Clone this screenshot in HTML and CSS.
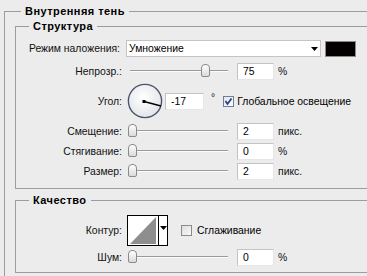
FILE: index.html
```html
<!DOCTYPE html>
<html>
<head>
<meta charset="utf-8">
<link rel="stylesheet" href="styles.css">
</head>
<body>
<div class="group outer">
  <div class="title">Внутренняя тень</div>

  <div class="group inner structure">
    <div class="title">Структура</div>

    <div class="row row-select">
      <span class="label label-select">Режим наложения:</span>
      <div class="select">
        <span>Умножение</span>
        <svg class="arrow" width="7" height="4" viewBox="0 0 7 4"><polygon points="0,0 7,0 3.5,4" fill="#000"/></svg>
      </div>
      <div class="swatch"></div>
    </div>

    <div class="row row-first">
      <span class="label">Непрозр.:</span>
      <div class="slider"><div class="track"></div><div class="thumb" style="left:74px"></div></div>
      <div class="input">75</div><span class="unit">%</span>
    </div>

    <div class="row row-angle">
      <span class="label">Угол:</span>
      <svg class="dial" width="36" height="36" viewBox="0 0 36 36">
        <defs>
          <radialGradient id="dg" cx="45%" cy="40%" r="60%">
            <stop offset="0" stop-color="#ffffff"/>
            <stop offset="1" stop-color="#e2e5ea"/>
          </radialGradient>
        </defs>
        <circle cx="18" cy="18" r="16.6" fill="url(#dg)" stroke="#4b566b" stroke-width="1.4"/>
        <line x1="17" y1="18.5" x2="34" y2="23" stroke="#000" stroke-width="1.3"/>
        <rect x="15.5" y="17" width="3" height="3" fill="#000"/>
      </svg>
      <div class="input input-angle">-17</div>
      <span class="deg">°</span>
      <svg class="check check-angle" width="11" height="11" viewBox="0 0 11 11">
        <defs>
          <linearGradient id="cg" x1="0" y1="0" x2="1" y2="1">
            <stop offset="0" stop-color="#dfe3ea"/>
            <stop offset="1" stop-color="#ffffff"/>
          </linearGradient>
        </defs>
        <rect x="0.5" y="0.5" width="10" height="10" fill="url(#cg)" stroke="#6f7d95"/>
        <polyline points="2.5,5 4.5,8 8.5,2.5" fill="none" stroke="#2b3f8f" stroke-width="1.8"/>
      </svg>
      <span class="check-label">Глобальное освещение</span>
    </div>

    <div class="row row-after">
      <span class="label">Смещение:</span>
      <div class="slider"><div class="track"></div><div class="thumb" style="left:1px"></div></div>
      <div class="input">2</div><span class="unit">пикс.</span>
    </div>

    <div class="row">
      <span class="label">Стягивание:</span>
      <div class="slider"><div class="track"></div><div class="thumb" style="left:1px"></div></div>
      <div class="input">0</div><span class="unit">%</span>
    </div>

    <div class="row">
      <span class="label">Размер:</span>
      <div class="slider"><div class="track"></div><div class="thumb" style="left:1px"></div></div>
      <div class="input">2</div><span class="unit">пикс.</span>
    </div>
  </div>

  <div class="group inner quality">
    <div class="title">Качество</div>

    <div class="row row-contour">
      <span class="label">Контур:</span>
      <div class="contour">
        <svg class="preview" width="30" height="29" viewBox="0 0 30 29">
          <polygon points="2,28 28,1 28,28" fill="#8e8e8e"/>
        </svg>
        <svg class="carrow" width="7" height="4" viewBox="0 0 7 4"><polygon points="0,0 7,0 3.5,4" fill="#000"/></svg>
      </div>
      <svg class="check check-smooth" width="11" height="11" viewBox="0 0 11 11">
        <defs>
          <linearGradient id="cg2" x1="0" y1="0" x2="1" y2="1">
            <stop offset="0" stop-color="#dcdcdc"/>
            <stop offset="1" stop-color="#fafafa"/>
          </linearGradient>
        </defs>
        <rect x="0.5" y="0.5" width="10" height="10" fill="url(#cg2)" stroke="#8a8a8a"/>
      </svg>
      <span class="check-label">Сглаживание</span>
    </div>

    <div class="row row-noise">
      <span class="label">Шум:</span>
      <div class="slider"><div class="track"></div><div class="thumb" style="left:1px"></div></div>
      <div class="input">0</div><span class="unit">%</span>
    </div>
  </div>
</div>
</body>
</html>
```

FILE: styles.css
```css
html, body {
  margin: 0;
  padding: 0;
}
body {
  width: 367px;
  height: 276px;
  overflow: hidden;
  background: #ececec;
  font-family: "Liberation Sans", Arial, sans-serif;
  font-size: 10.4px;
  color: #111;
}

.group {
  border: 1px solid #9c9c9c;
  border-right: none;
}
.outer {
  margin: 11px 0 0 4px;
  width: 362px;
  height: 264px;
  border-bottom: none;
}
.title {
  width: max-content;
  height: 13px;
  line-height: 13px;
  margin: -7px 0 0 16px;
  padding: 0 4px;
  background: #ececec;
  font-size: 11px;
  font-weight: bold;
  letter-spacing: 0.45px;
  color: #000;
}
.inner {
  margin-left: 10px;
  width: 352px;
}
.inner > .title {
  margin-left: 13px;
}
.structure {
  margin-top: 8px;
  padding-bottom: 7px;
}
.quality {
  margin-top: 11px;
  padding-bottom: 5px;
}

.row {
  display: flex;
  align-items: center;
  height: 20px;
}
.label {
  flex: none;
  width: 106px;
  margin-right: 5px;
  text-align: right;
}
.row-select {
  margin-top: 7px;
  height: 17px;
}
.label-select {
  width: 104px;
  margin-right: 6px;
}
.row-first {
  margin-top: 4px;
}
.row-angle {
  margin-top: 2px;
  height: 36px;
}
.row-after {
  margin-top: 2px;
}
.row-contour {
  margin-top: 8px;
  height: 31px;
}
.row-noise {
  margin-top: 1px;
}

.select {
  flex: none;
  box-sizing: border-box;
  width: 195px;
  height: 17px;
  border: 1px solid #c4c4c4;
  background: #fff;
  display: flex;
  align-items: center;
  padding-left: 2px;
  color: #000;
}
.select .arrow {
  margin-left: auto;
  margin-right: 2px;
}
.swatch {
  flex: none;
  box-sizing: border-box;
  width: 31px;
  height: 16px;
  margin-left: 4px;
  background: #050000;
  border: 1px solid #8a8a8a;
}

.slider {
  flex: none;
  position: relative;
  width: 102px;
  height: 20px;
  margin-right: 8px;
}
.track {
  margin: 9px 0 0 3px;
  width: 98px;
  height: 1px;
  background: #9a9a9a;
  border-bottom: 1px solid #fdfdfd;
}
.thumb {
  position: absolute;
  top: 3px;
  box-sizing: border-box;
  width: 9px;
  height: 13px;
  border: 1px solid #8a8a8a;
  border-radius: 4px 4px 2px 2px;
  background: linear-gradient(#ffffff, #dadada);
}

.input {
  flex: none;
  box-sizing: border-box;
  width: 37px;
  height: 17px;
  line-height: 15px;
  padding-left: 5px;
  background: #fff;
  border: 1px solid;
  border-color: #c3c3c3 #e6e6e6 #e6e6e6 #c3c3c3;
  color: #000;
}
.unit {
  margin-left: 4px;
}

.dial {
  flex: none;
  margin-right: 2px;
}
.input-angle {
  width: 39px;
  margin-left: 0;
}
.deg {
  margin-left: 7px;
  align-self: flex-start;
  margin-top: 9px;
}
.check {
  flex: none;
}
.check-angle {
  margin-left: 8px;
}
.check-label {
  margin-left: 3px;
  color: #000;
}
.check-smooth {
  margin-left: 13px;
}
.check-smooth + .check-label {
  margin-left: 5px;
}

.contour {
  flex: none;
  box-sizing: border-box;
  width: 41px;
  height: 31px;
  border: 1px solid #000;
  background: #fff;
  display: flex;
}
.preview {
  flex: none;
  border-right: 1px solid #000;
}
.carrow {
  margin: 10px 0 0 1px;
}
```
